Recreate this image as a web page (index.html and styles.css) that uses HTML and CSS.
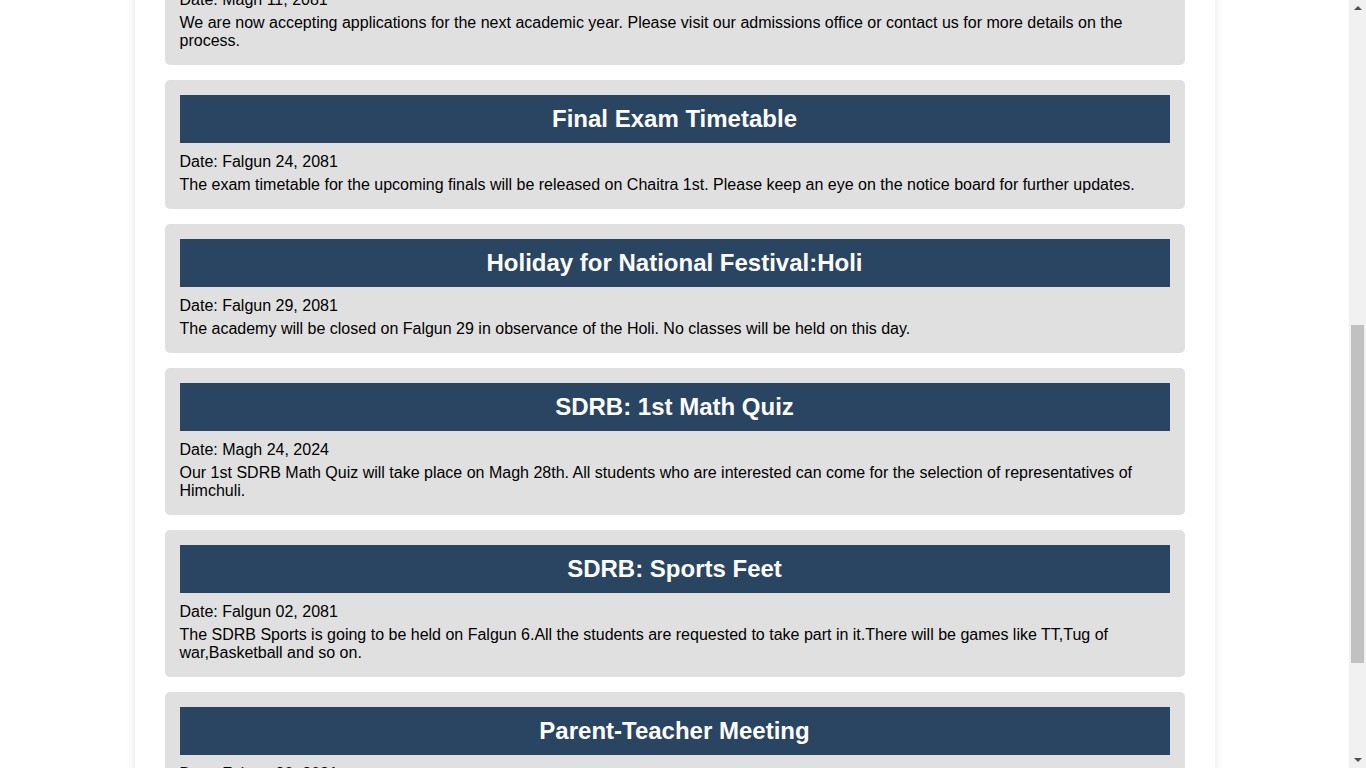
FILE: index.html
```html
<!DOCTYPE html>
<html lang="en">
<head>
<meta charset="utf-8">
<title>Notice Board</title>
<link rel="stylesheet" href="styles.css">
</head>
<body>
<main class="board">
  <header class="page-head">
    <h1>Notice Board</h1>
    <p>Latest announcements from the academy.</p>
  </header>

  <article class="notice">
    <h2 class="notice-title">Welcome Back</h2>
    <p class="notice-date">Date: Magh 1, 2081</p>
    <p class="notice-text">Classes resume from Magh 2. All students are requested to attend on time.</p>
  </article>
  <article class="notice">
    <h2 class="notice-title">Library Hours</h2>
    <p class="notice-date">Date: Magh 5, 2081</p>
    <p class="notice-text">The library will stay open until 5 PM on weekdays.</p>
  </article>
  <article class="notice">
    <h2 class="notice-title">Uniform Notice</h2>
    <p class="notice-date">Date: Magh 8, 2081</p>
    <p class="notice-text">All students must wear the proper school uniform every day.</p>
  </article>

  <article class="notice">
    <h2 class="notice-title">Admissions Open</h2>
    <p class="notice-date">Date: Magh 11, 2081</p>
    <p class="notice-text">We are now accepting applications for the next academic year. Please visit our admissions office or contact us for more details on the process.</p>
  </article>
  <article class="notice">
    <h2 class="notice-title">Final Exam Timetable</h2>
    <p class="notice-date">Date: Falgun 24, 2081</p>
    <p class="notice-text">The exam timetable for the upcoming finals will be released on Chaitra 1st. Please keep an eye on the notice board for further updates.</p>
  </article>
  <article class="notice">
    <h2 class="notice-title">Holiday for National Festival:Holi</h2>
    <p class="notice-date">Date: Falgun 29, 2081</p>
    <p class="notice-text">The academy will be closed on Falgun 29 in observance of the Holi. No classes will be held on this day.</p>
  </article>
  <article class="notice">
    <h2 class="notice-title">SDRB: 1st Math Quiz</h2>
    <p class="notice-date">Date: Magh 24, 2024</p>
    <p class="notice-text">Our 1st SDRB Math Quiz will take place on Magh 28th. All students who are interested can come for the selection of representatives of Himchuli.</p>
  </article>
  <article class="notice">
    <h2 class="notice-title">SDRB: Sports Feet</h2>
    <p class="notice-date">Date: Falgun 02, 2081</p>
    <p class="notice-text">The SDRB Sports is going to be held on Falgun 6.All the students are requested to take part in it.There will be games like TT,Tug of war,Basketball and so on.</p>
  </article>
  <article class="notice">
    <h2 class="notice-title">Parent-Teacher Meeting</h2>
    <p class="notice-date">Date: Falgun 30, 2081</p>
    <p class="notice-text">A parent-teacher meeting will be held in the main hall. All parents are kindly requested to attend.</p>
  </article>
</main>

<aside class="scrollbar" aria-hidden="true">
  <div class="sb-button"><span class="sb-arrow-up"></span></div>
  <div class="sb-track"><div class="sb-thumb"></div></div>
  <div class="sb-button"><span class="sb-arrow-down"></span></div>
</aside>

<script src="script.js"></script>
</body>
</html>
```

FILE: styles.css
```css
html, body {
  margin: 0;
  padding: 0;
  background: #ffffff;
}

body {
  font-family: "Liberation Sans", Arial, sans-serif;
  font-size: 16px;
  color: #000000;
  padding-right: 17px;
}

.board {
  max-width: 1080px;
  margin: 0 auto;
  padding: 30px 30px 137px;
  box-sizing: border-box;
  background: #ffffff;
  box-shadow: 0 0 10px rgba(0, 0, 0, 0.1);
}

.page-head {
  height: 145px;
  margin-bottom: 15px;
}

.page-head h1 {
  margin: 0 0 10px;
  font-size: 32px;
  color: #2a4562;
}

.page-head p {
  margin: 0;
}

.notice {
  background: #e0e0e0;
  border-radius: 5px;
  padding: 15px;
  margin-bottom: 15px;
}

.notice-title {
  margin: 0 0 10px;
  padding: 10px;
  background: #2a4562;
  color: #ffffff;
  font-size: 24px;
  font-weight: bold;
  text-align: center;
}

.notice-date {
  margin: 0 0 5px;
}

.notice-text {
  margin: 0;
}

/* window scrollbar (drawn over the right edge) */
.scrollbar {
  position: fixed;
  top: 0;
  right: 0;
  width: 17px;
  height: 100vh;
  background: #f1f1f1;
  display: flex;
  flex-direction: column;
}

.sb-button {
  height: 17px;
  flex: 0 0 17px;
  display: flex;
  align-items: center;
  justify-content: center;
}

.sb-arrow-up {
  width: 0;
  height: 0;
  border-left: 4px solid transparent;
  border-right: 4px solid transparent;
  border-bottom: 4px solid #505050;
  margin-top: -1px;
}

.sb-arrow-down {
  width: 0;
  height: 0;
  border-left: 4px solid transparent;
  border-right: 4px solid transparent;
  border-top: 4px solid #505050;
  margin-top: 1px;
}

.sb-track {
  flex: 1;
  padding: 0 2px;
}

.sb-thumb {
  margin-top: 308px;
  height: 338px;
  background: #c1c1c1;
}
```

FILE: script.js
```js
window.scrollTo(0, 704);
```
